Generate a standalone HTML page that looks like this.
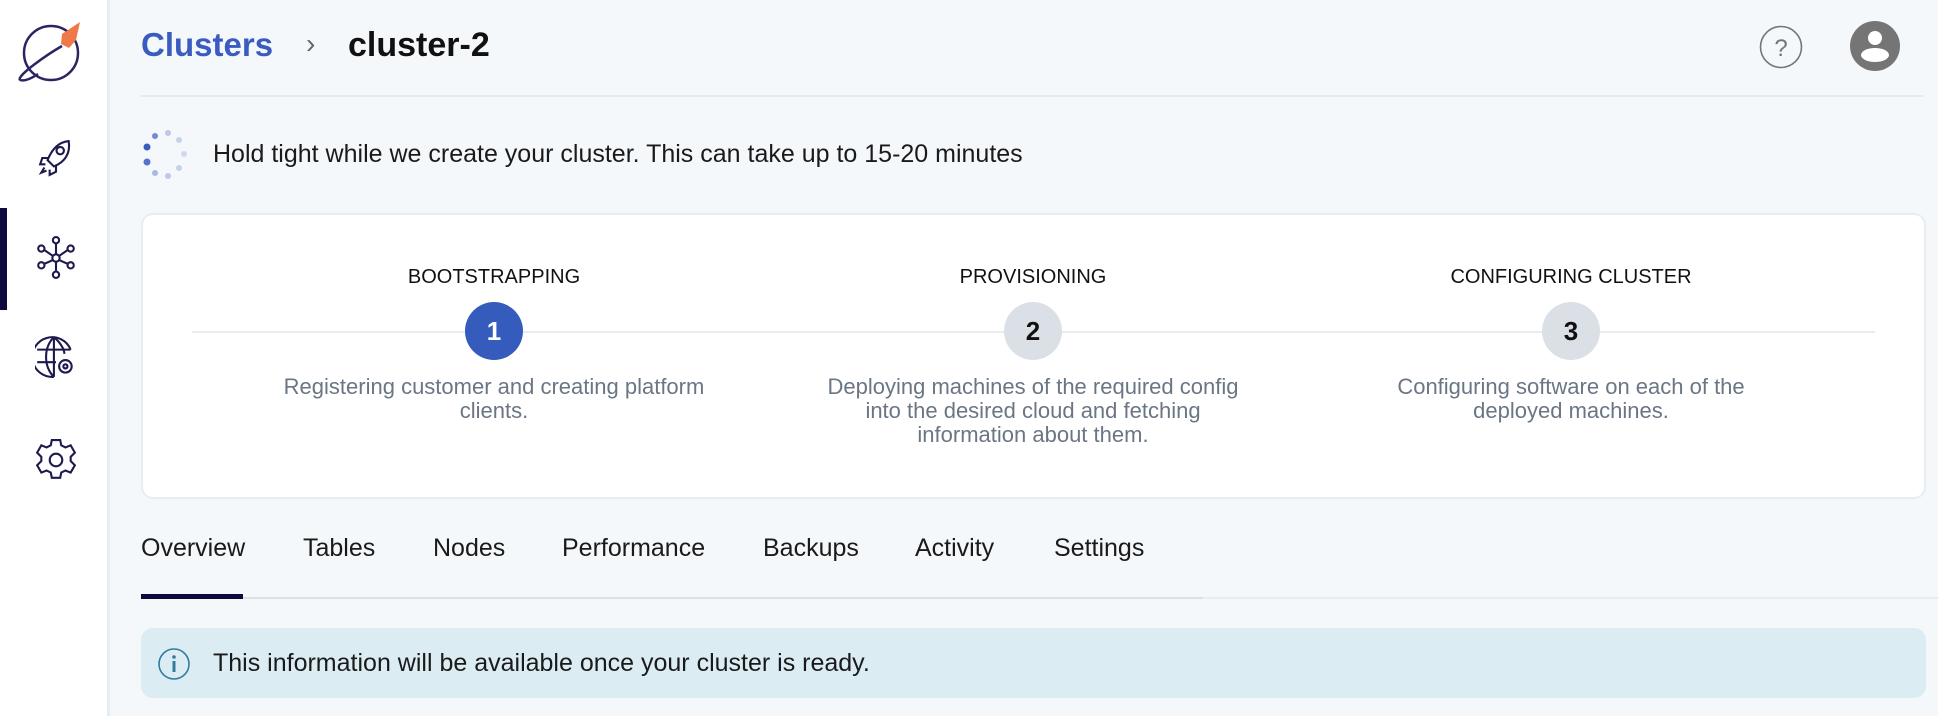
<!DOCTYPE html>
<html><head><meta charset="utf-8"><style>
*{margin:0;padding:0;box-sizing:border-box}
body{width:1938px;height:716px;background:#f5f8fb;font-family:"Liberation Sans",sans-serif;position:relative;overflow:hidden;color:#111}
.a{position:absolute}
.side{left:0;top:0;width:110px;height:716px;background:#fff;border-right:3px solid #e8edf2}
.t{white-space:nowrap}
.step{position:absolute;width:600px;text-align:center}
.step h4{font-weight:normal;font-size:20px;color:#111;line-height:24px}
.step p{position:absolute;left:0;width:600px;top:110px;font-size:22px;color:#6b7684;line-height:24px}
.circ{position:absolute;width:58px;height:58px;border-radius:50%;top:302px;text-align:center;line-height:58px;font-size:26px;font-weight:bold}
.tab{position:absolute;top:534px;font-size:25px;color:#1a1a1a}
</style></head><body>
<div class="a side"></div>
<!-- logo -->
<svg class="a" style="left:16px;top:18px" width="66" height="66" viewBox="0 0 66 66">
<circle cx="35" cy="35" r="27" fill="none" stroke="#2b2563" stroke-width="2.5"/>
<path d="M4 62 C0 58 32 36 46 28" fill="none" stroke="#2b2563" stroke-width="2.5"/>
<path d="M4 62 Q10 64 22 56" fill="none" stroke="#2b2563" stroke-width="2.5"/>
<path d="M46 16 L64 4 L60 22 L53 30 L45 26 Z" fill="#ef7748"/>
</svg>
<!-- rocket -->
<svg class="a" style="left:38px;top:139px" width="36" height="38" viewBox="0 0 32 36" fill="none" stroke="#1d1a4d" stroke-width="2">
<path d="M28 2 C18 3 12 10 8 20 L14 26 C24 22 30 14 28 2Z"/><circle cx="20" cy="11" r="3.5"/>
<path d="M9 18 L3 18 L1 24 L6 24"/><path d="M16 25 L16 31 L10 34 L10 29"/><path d="M5 27 L2 32 L7 30"/>
</svg>
<div class="a" style="left:0;top:208px;width:7px;height:102px;background:#0c0a3e"></div>
<!-- cluster icon -->
<svg class="a" style="left:37px;top:236px" width="38" height="44" viewBox="0 0 36 42" fill="none" stroke="#1d1a4d" stroke-width="2">
<circle cx="18" cy="21" r="3.5"/><circle cx="18" cy="4" r="3"/><circle cx="18" cy="37" r="3"/>
<circle cx="4" cy="12" r="3"/><circle cx="32" cy="12" r="3"/><circle cx="4" cy="28" r="3"/><circle cx="32" cy="28" r="3"/>
<path d="M18 7V17.5M18 24.5V34M7 13.5L15 19M29 13.5L21 19M7 26.5L15 23M29 26.5L21 23"/>
</svg>
<!-- globe -->
<svg class="a" style="left:35px;top:335px" width="42" height="46" viewBox="0 0 40 44" fill="none" stroke="#1d1a4d" stroke-width="2">
<path d="M34 14 A19 19 0 1 0 18 40"/><path d="M18 2 C8 12 8 30 18 40 M18 2 C26 9 28 15 28 18"/><path d="M2 14H34M2 26H20M18 2V40"/>
<circle cx="29" cy="30" r="6"/><circle cx="29" cy="30" r="2"/>
</svg>
<!-- gear -->
<svg class="a" style="left:35px;top:438px" width="42" height="44" viewBox="0 0 40 42" fill="none" stroke="#1d1a4d" stroke-width="2">
<path d="M16 2h8l1 5 4 2 5-2 4 7-4 4v4l4 4-4 7-5-2-4 2-1 5h-8l-1-5-4-2-5 2-4-7 4-4v-4L2 14l4-7 5 2 4-2z"/><circle cx="20" cy="21" r="6"/>
</svg>
<!-- header -->
<div class="a t" style="left:141px;top:26px;font-size:33px;font-weight:bold;color:#3a5bbf">Clusters</div>
<div class="a t" style="left:306px;top:28px;font-size:28px;color:#666">›</div>
<div class="a t" style="left:348px;top:26px;font-size:34px;font-weight:bold;color:#111">cluster-2</div>
<div class="a" style="left:141px;top:95px;width:1782px;height:2px;background:#e6eaee"></div>
<svg class="a" style="left:1759px;top:25px" width="44" height="44"><circle cx="22" cy="22" r="20.5" fill="none" stroke="#757575" stroke-width="1.6"/><text x="22" y="31" text-anchor="middle" font-family="Liberation Sans" font-size="24" fill="#757575">?</text></svg>
<svg class="a" style="left:1850px;top:21px" width="50" height="50"><circle cx="25" cy="25" r="25" fill="#757575"/><circle cx="25" cy="17" r="7" fill="#fff"/><ellipse cx="25" cy="34" rx="14" ry="7" fill="#fff"/></svg>
<!-- spinner -->
<svg class="a" style="left:140px;top:128px" width="54" height="54" fill="#3a5bbf">
<circle cx="15" cy="8" r="3" opacity=".7"/><circle cx="28" cy="5" r="3" opacity=".3"/><circle cx="39" cy="12" r="3" opacity=".25"/><circle cx="44" cy="26" r="3" opacity=".2"/><circle cx="39" cy="40" r="3" opacity=".25"/><circle cx="28" cy="48" r="3" opacity=".3"/><circle cx="15" cy="45" r="3" opacity=".4"/><circle cx="7" cy="34" r="3.5" opacity=".85"/><circle cx="7" cy="19" r="3.5"/>
</svg>
<div class="a t" style="left:213px;top:140px;font-size:25px;color:#1a1a1a">Hold tight while we create your cluster. This can take up to 15-20 minutes</div>
<!-- card -->
<div class="a" style="left:141px;top:213px;width:1785px;height:286px;background:#fff;border:2px solid #e8edf2;border-radius:12px"></div>
<div class="a" style="left:192px;top:331px;width:1683px;height:2px;background:#e8ecf0"></div>
<div class="step" style="left:194px;top:265px"><h4>BOOTSTRAPPING</h4><p>Registering customer and creating platform<br>clients.</p></div>
<div class="step" style="left:733px;top:265px"><h4>PROVISIONING</h4><p>Deploying machines of the required config<br>into the desired cloud and fetching<br>information about them.</p></div>
<div class="step" style="left:1271px;top:265px"><h4>CONFIGURING CLUSTER</h4><p>Configuring software on each of the<br>deployed machines.</p></div>
<div class="circ" style="left:465px;background:#355bbd;color:#fff">1</div>
<div class="circ" style="left:1004px;background:#dbe0e6;color:#111">2</div>
<div class="circ" style="left:1542px;background:#dbe0e6;color:#111">3</div>
<!-- tabs -->
<div class="tab" style="left:141px">Overview</div>
<div class="tab" style="left:303px">Tables</div>
<div class="tab" style="left:433px">Nodes</div>
<div class="tab" style="left:562px">Performance</div>
<div class="tab" style="left:763px">Backups</div>
<div class="tab" style="left:915px">Activity</div>
<div class="tab" style="left:1054px">Settings</div>
<div class="a" style="left:141px;top:597px;width:1062px;height:2px;background:#dde1e6"></div>
<div class="a" style="left:1203px;top:597px;width:735px;height:2px;background:#e9edf1"></div>
<div class="a" style="left:141px;top:594px;width:102px;height:5px;background:#0c0a3e"></div>
<!-- info -->
<div class="a" style="left:141px;top:628px;width:1785px;height:70px;background:#dcecf3;border-radius:12px"></div>
<svg class="a" style="left:158px;top:648px" width="34" height="34"><circle cx="16" cy="16" r="15" fill="none" stroke="#2f7d9e" stroke-width="1.6"/><rect x="14.5" y="13" width="3" height="11" fill="#2f7d9e"/><circle cx="16" cy="9" r="1.8" fill="#2f7d9e"/></svg>
<div class="a t" style="left:213px;top:649px;font-size:25px;color:#1a1a1a">This information will be available once your cluster is ready.</div>
</body></html>
